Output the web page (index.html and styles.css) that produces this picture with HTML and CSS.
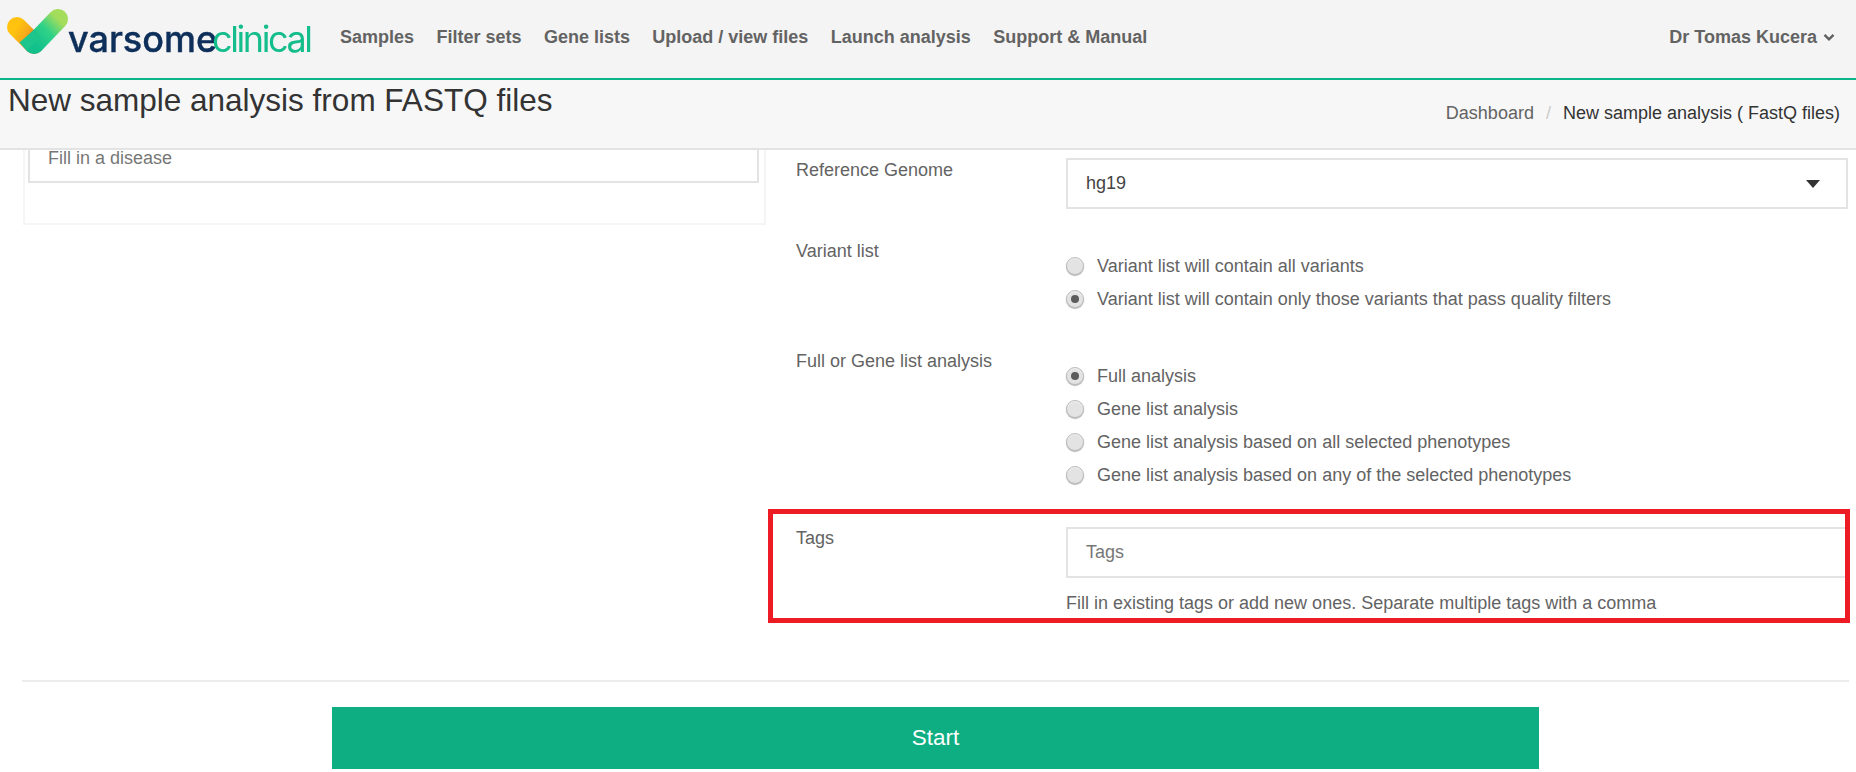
FILE: index.html
```html
<!DOCTYPE html>
<html lang="en">
<head>
<meta charset="utf-8">
<title>New sample analysis from FASTQ files</title>
<link rel="stylesheet" href="styles.css">
</head>
<body>
<header class="navbar">
  <a class="logo" href="#" aria-label="varsome clinical">
    <svg width="320" height="78" viewBox="0 0 320 78">
      <defs>
        <linearGradient id="arm" x1="0" y1="0" x2="1" y2="0.6">
          <stop offset="0" stop-color="#ffc20e"/>
          <stop offset="0.6" stop-color="#f6a81c"/>
          <stop offset="1" stop-color="#dc6f24"/>
        </linearGradient>
        <linearGradient id="stem" x1="0" y1="1" x2="1" y2="0">
          <stop offset="0" stop-color="#12c08c"/>
          <stop offset="0.55" stop-color="#2fd287"/>
          <stop offset="1" stop-color="#a4dc5c"/>
        </linearGradient>
      </defs>
      <path d="M17 27 L34 44" fill="none" stroke="url(#arm)" stroke-width="20" stroke-linecap="round"/>
      <path d="M34 44 L58 19" fill="none" stroke="url(#stem)" stroke-width="20" stroke-linecap="round"/>
      <path d="M27 36 L34 44" fill="none" stroke="#1cc58b" stroke-width="20"/>
      <text class="logo-a" x="68" y="52">varsome</text>
      <text class="logo-b" x="212" y="52">clinical</text>
    </svg>
  </a>
  <nav class="nav">
    <a href="#">Samples</a>
    <a href="#">Filter sets</a>
    <a href="#">Gene lists</a>
    <a href="#">Upload / view files</a>
    <a href="#">Launch analysis</a>
    <a href="#">Support &amp; Manual</a>
  </nav>
  <a class="user" href="#">Dr Tomas Kucera
    <svg width="12" height="9" viewBox="0 0 12 9"><path d="M1.5 1.8 L6 6.3 L10.5 1.8" fill="none" stroke="#5f5f5f" stroke-width="2.4"/></svg>
  </a>
</header>

<div class="pagebar">
  <h1>New sample analysis from FASTQ files</h1>
  <ol class="crumbs">
    <li><a href="#">Dashboard</a></li>
    <li class="sep">/</li>
    <li class="current">New sample analysis ( FastQ files)</li>
  </ol>
</div>

<main class="content">
  <div class="columns">
    <section class="card">
      <div class="field-input disease">Fill in a disease</div>
    </section>
    <section class="form">
      <div class="row row-genome">
        <div class="label">Reference Genome</div>
        <div class="select"><span>hg19</span><i class="caret"></i></div>
      </div>
      <div class="row row-variant">
        <div class="label">Variant list</div>
        <div class="radios">
          <label class="radio"><i class="dot"></i>Variant list will contain all variants</label>
          <label class="radio"><i class="dot on"></i>Variant list will contain only those variants that pass quality filters</label>
        </div>
      </div>
      <div class="row row-full">
        <div class="label">Full or Gene list analysis</div>
        <div class="radios">
          <label class="radio"><i class="dot on"></i>Full analysis</label>
          <label class="radio"><i class="dot"></i>Gene list analysis</label>
          <label class="radio"><i class="dot"></i>Gene list analysis based on all selected phenotypes</label>
          <label class="radio"><i class="dot"></i>Gene list analysis based on any of the selected phenotypes</label>
        </div>
      </div>
      <div class="row row-tags">
        <div class="label">Tags</div>
        <div class="tags-col">
          <div class="field-input tags">Tags</div>
          <p class="help">Fill in existing tags or add new ones. Separate multiple tags with a comma</p>
        </div>
      </div>
    </section>
  </div>
  <hr class="rule">
  <div class="actions"><button class="start" type="button">Start</button></div>
</main>
</body>
</html>
```
FILE: styles.css
```css
* { box-sizing: border-box; }
html, body { margin: 0; height: 772px; overflow: hidden; background: #fff; }
body { font-family: "Liberation Sans", Arial, sans-serif; font-size: 18px; color: #636363; }
a { color: inherit; text-decoration: none; }

.navbar {
  height: 80px;
  background: #f4f4f4;
  border-bottom: 2px solid #0db58b;
  display: flex;
  align-items: center;
  padding-right: 21px;
}
.logo { width: 320px; height: 78px; flex: none; display: block; margin-right: 20px; }
.logo svg { display: block; filter: blur(0.4px); }
.logo-a { font: 500 36px "Inter", sans-serif; letter-spacing: 0; fill: #0d2f5a; stroke: #0d2f5a; stroke-width: .4px; }
.logo-b { font: 400 36px "Inter", sans-serif; letter-spacing: -2.4px; fill: #14bd8c; }
.nav { display: flex; gap: 22.4px; font-weight: 700; font-size: 18px; padding-bottom: 3px; }
.user { margin-left: auto; font-weight: 700; font-size: 18px; padding-bottom: 3px; display: flex; align-items: center; gap: 6px; }

.pagebar {
  height: 70px;
  background: #f7f7f7;
  border-bottom: 2px solid #e3e3e3;
  display: flex;
  justify-content: space-between;
  align-items: flex-start;
  padding: 0 16px 0 8px;
}
.pagebar h1 { margin: 0; font-size: 31.5px; font-weight: 400; color: #333; line-height: 40px; }
.crumbs { list-style: none; margin: 0; padding: 23px 0 0; display: flex; gap: 12px; font-size: 18px; line-height: 20px; }
.crumbs .sep { color: #ccc; }
.crumbs .current { color: #333; }

.columns { display: flex; height: 530px; }
.card {
  width: 743px;
  height: 75px;
  margin-left: 23px;
  border: 2px solid #f5f5f5;
  border-top: 0;
  padding: 0 5px 0 3px;
  flex: none;
}
.field-input { border: 2px solid #e3e3e3; background: #fff; color: #777; padding: 0 18px; }
.disease { height: 33px; display: flex; align-items: flex-end; padding-bottom: 15px; line-height: 16px; border-top: none; }

.form { margin-left: 3px; flex: 1; }
.row { display: flex; }
.label { width: 297px; flex: none; padding-left: 27px; line-height: 20px; }
.row-genome { padding-top: 10px; height: 91px; }
.select {
  width: 782px;
  height: 51px;
  margin-top: -2px;
  border: 2px solid #e3e3e3;
  padding: 0 26px 0 18px;
  display: flex;
  align-items: center;
  justify-content: space-between;
  color: #444;
}
.caret { width: 0; height: 0; border: 7px solid transparent; border-top: 8px solid #333; border-bottom: 0; }
.row-variant { height: 110px; }
.row-full { height: 158px; }
.radios { padding-top: 15px; display: flex; flex-direction: column; gap: 13px; }
.radio { display: flex; align-items: center; height: 20px; line-height: 20px; }
.dot {
  width: 18px;
  height: 18px;
  margin-right: 13px;
  border-radius: 50%;
  background: #e3e3e3;
  border: 1px solid #bdbdbd;
  box-shadow: inset 0 1px 1px #f3f3f3, 0 1px 1px #b5b5b5;
  display: flex;
  align-items: center;
  justify-content: center;
  flex: none;
}
.dot.on::after { content: ""; width: 8px; height: 8px; border-radius: 50%; background: #5c5c5c; }

.row-tags {
  width: 1082px;
  height: 114px;
  margin-left: -1px;
  border: 5px solid #ed1c24;
  padding-top: 14px;
}
.row-tags .label { width: 293px; padding-left: 23px; }
.tags-col { flex: 1; }
.tags { height: 51px; border-right: none; margin-top: -1px; display: flex; align-items: center; }
.help { margin: 15px 0 0; line-height: 20px; }

.rule { height: 2px; margin: 0 7px 0 22px; border: 0; background: #ececec; }
.actions { display: flex; padding: 25px 0 0 332px; }
.start {
  width: 1207px;
  height: 62px;
  border: 0;
  background: #0fae82;
  color: #fff;
  font: 400 22.5px "Liberation Sans", Arial, sans-serif;
}
```
